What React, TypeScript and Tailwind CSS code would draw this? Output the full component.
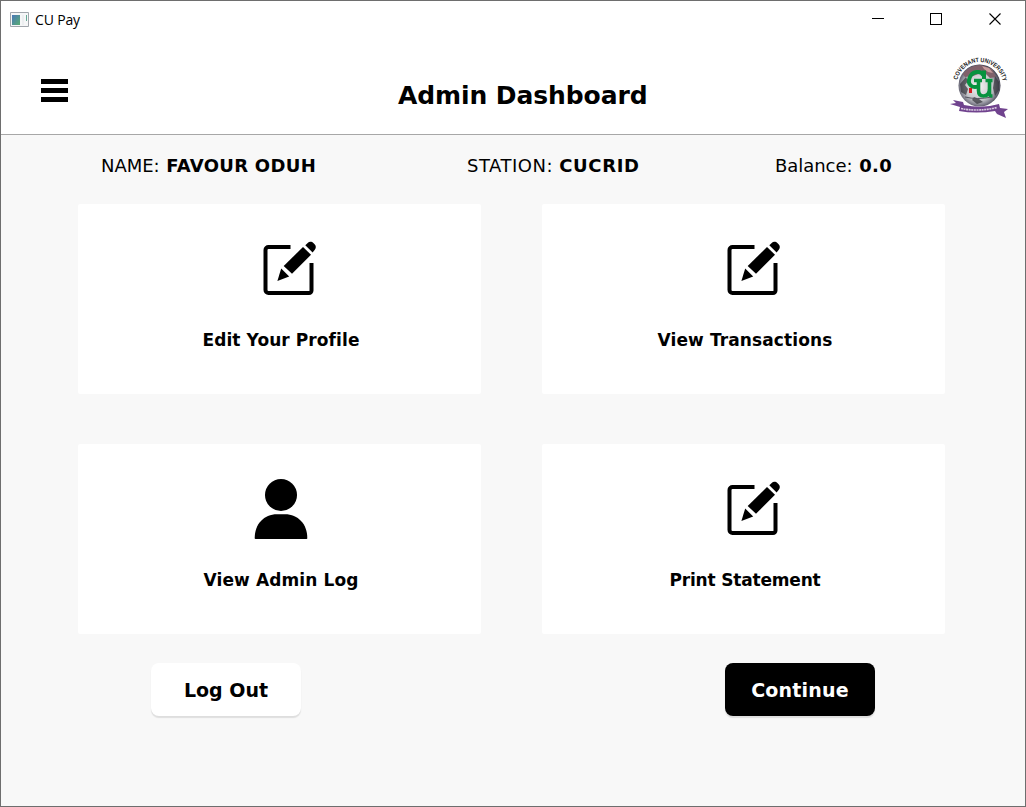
import React from "react";

function EditIcon() {
  return (
    <svg width="60" height="60" viewBox="0 0 60 60" className="mt-[1px] ml-[15px] block" aria-hidden="true">
      <path d="M31.500 8H9.500a3 3 0 0 0-3 3v40a3 3 0 0 0 3 3h40.500a2.500 2.500 0 0 0 2.500-2.500V24" fill="none" stroke="#000" strokeWidth="4" />
      <path d="M24.700 27 44 8l8 7.800-19 19z" />
      <path d="M22.200 29.600l8 7.800-11.800 4.600z" />
      <path d="M46.300 6.200l2.400-2.300c1.700-1.700 4.100-1.500 5.900.3l1 1c1.600 1.700 1.700 4 0 5.700l-2 2.500z" />
    </svg>
  );
}

function PersonIcon() {
  return (
    <svg width="60" height="64" viewBox="0 0 60 64" className="block" aria-hidden="true">
      <circle cx="30" cy="17" r="16" />
      <path d="M3.700 60.200C3.700 46 13 36.300 26 36.300h8C47 36.300 56.300 46 56.300 60.200q0 .8-.8.8h-51q-.8 0-.8-.8z" />
    </svg>
  );
}

function Crest() {
  return (
    <svg width="64" height="68" viewBox="0 0 64 68" className="block" aria-hidden="true">
      <defs>
        <radialGradient id="globe" cx="48%" cy="52%" r="52%">
          <stop offset="0" stopColor="#f4f5f4" />
          <stop offset=".65" stopColor="#c4c4c9" />
          <stop offset=".88" stopColor="#767583" />
          <stop offset="1" stopColor="#454351" />
        </radialGradient>
        <path id="arc" d="M10.400 26A23.200 23.200 0 0 1 55.600 26" />
      </defs>
      <circle cx="32.500" cy="31.500" r="21" fill="url(#globe)" />
      <path d="M16 20Q23 11 34 11l11 4 4 8-6 1-6-6-11 4-8 1z" fill="#80616a" />
      <path d="M35 12l7 2 4 5-5-1-4-3z" fill="#c79b9b" />
      <path d="M13 30l6-7 2 4-3 4 3 4-2 6-5-3zM27 43l5 2 4 3-6 2-5-4zM48 22l4 6v8l-4 6-2-8z" fill="#303038" opacity=".7" />
      <path d="M22 34h3v5h-3z" fill="#d31c20" />
      <path d="M18 43q12 3 27 0" fill="none" stroke="#555660" strokeWidth="1" />
      <path d="M37 25v-8.500M36.500 21.500C34 16 25 17 22.500 24C20 31 26 35 32 32" fill="none" stroke="#07933f" strokeWidth="4" />
      <path d="M27 26.500h8M31.500 27v9.500q0 5.500 5 5.500q6 0 6-7.500V27M38.500 26.500h7M42.500 35v5q0 2 3 2" fill="none" stroke="#07933f" strokeWidth="3.600" />
      <text className="font-['Liberation_Sans'] text-[6.200px] font-bold" fill="#171717">
        <textPath href="#arc" textLength="63.500" lengthAdjust="spacingAndGlyphs">COVENANT UNIVERSITY</textPath>
      </text>
      <path d="M3 50l6-1-3-3 10 2 1 3q18 4 35-1l1 4 8 1-4 3 2 6-9-4-2-3Q29 60 12 57l1-4z" fill="#70438e" />
      <path d="M14 54.500Q31 58 50 53.500" fill="none" stroke="#d8c9df" strokeWidth="1.600" strokeDasharray="2 .6" />
    </svg>
  );
}

function Card({ title, icon, tracking }: { title: string; icon: React.ReactNode; tracking: string }) {
  return (
    <button className="flex h-[190px] w-[403px] flex-col items-center rounded-[2px] bg-white pt-[34px]">
      <span className="flex h-[64px] items-start pl-[3px]">{icon}</span>
      <span className={"mt-[26px] pl-[3px] text-[17px] leading-6 font-bold whitespace-nowrap " + tracking}>{title}</span>
    </button>
  );
}

export default function App() {
  return (
    <div className="flex h-[807px] w-[1026px] flex-col overflow-hidden border border-[#6e6e6e] bg-[#f8f8f8] font-['DejaVu_Sans',sans-serif] text-black">
      <div className="flex h-[37px] shrink-0 items-center bg-white pl-[9px]">
        <svg width="19" height="16" viewBox="0 0 19 16" className="block" aria-hidden="true">
          <defs>
            <linearGradient id="app" x1="0" y1="0" x2="1" y2="1">
              <stop stopColor="#4a77b8" />
              <stop offset="1" stopColor="#58ad72" />
            </linearGradient>
          </defs>
          <path d="M.5.500h18v14H.5z" fill="#f5f6f7" stroke="#a1a6ac" />
          <path d="M2 3h8v10H2z" fill="url(#app)" />
          <path d="M12 3h2v10h-2z" fill="#eceef0" />
          <path d="M16 3h1v6h-1z" fill="#65a995" />
        </svg>
        <span className="ml-[6px] font-['Open_Sans',sans-serif] text-[14px] tracking-[-0.15px]">CU Pay</span>
        <div className="ml-auto flex h-full items-center pr-[23px] pb-[1px]">
          <svg width="132" height="14" viewBox="0 0 132 14" className="block" fill="none" stroke="#000" shapeRendering="crispEdges" aria-hidden="true">
            <path d="M2 6.500h12M60.500 1.500h11v11h-11z" />
            <path d="M119.500 1.500l11 11M130.500 1.500l-11 11" shapeRendering="auto" strokeWidth="1.100" />
          </svg>
        </div>
      </div>
      <header className="flex h-[97px] shrink-0 items-start border-b border-[#a7a7a7] bg-white pl-[40px]">
        <button className="mt-[41px] flex w-[27px] flex-col gap-1" aria-label="Menu">
          <span className="h-[5px] w-full bg-black" />
          <span className="h-[5px] w-full bg-black" />
          <span className="h-[5px] w-full bg-black" />
        </button>
        <h1 className="mt-[42px] ml-[330px] w-[260px] text-[25px] leading-8 font-bold tracking-[-0.090px] whitespace-nowrap">Admin Dashboard</h1>
        <div className="mt-[16px] mr-[14px] ml-auto"><Crest /></div>
      </header>
      <section className="flex h-[69px] shrink-0 pt-[19px] pl-[100px] text-[18px] leading-6 whitespace-nowrap">
        <p className="w-[366px] tracking-[-0.050px]">NAME: <b className="ml-[1px] tracking-[0.300px]">FAVOUR ODUH</b></p>
        <p className="w-[308px] tracking-[0.500px]">STATION: <b className="tracking-[0.650px]">CUCRID</b></p>
        <p className="tracking-[-0.050px]">Balance: <b className="ml-[1px] tracking-[0.400px]">0.0</b></p>
      </section>
      <main className="grid shrink-0 grid-cols-[403px_403px] gap-x-[61px] gap-y-[50px] pl-[77px]">
        <Card title="Edit Your Profile" icon={<EditIcon />} tracking="tracking-[0.090px]" />
        <Card title="View Transactions" icon={<EditIcon />} tracking="tracking-[0.110px]" />
        <Card title="View Admin Log" icon={<PersonIcon />} tracking="tracking-[0.110px]" />
        <Card title="Print Statement" icon={<EditIcon />} tracking="tracking-[-0.180px]" />
      </main>
      <div className="mt-[29px] flex gap-[424px] pl-[150px] text-[19px] font-bold">
        <button className="h-[53px] w-[150px] rounded-[8px] bg-white pt-[2px] shadow-[0_2px_1px_#dedede]">Log Out</button>
        <button className="h-[53px] w-[150px] rounded-[8px] bg-black pt-[2px] tracking-[0.200px] text-white shadow-[0_2px_1px_#dedede]">Continue</button>
      </div>
    </div>
  );
}
